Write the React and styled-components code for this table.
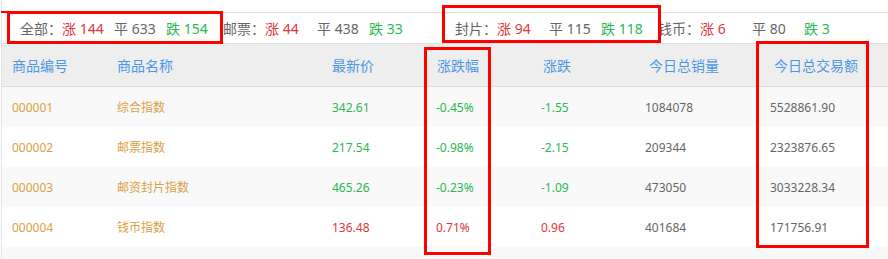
import React from "react";
import styled, {createGlobalStyle} from "styled-components";

const GlobalStyle = createGlobalStyle`
  html, body {
    margin: 0;
    padding: 0;
    overflow: hidden;
    background: #FFFFFF;
  }
  body {
    font-family: "Noto Sans", "Noto Sans CJK SC", sans-serif;
  }
`

const Page = styled.div`
  position: relative;
  margin-left: 1px;
  padding-top: 12px;
  height: 259px;
  box-sizing: border-box;
  border-left: 1px solid #E2E2E2;
`
const StatsBar = styled.div`
  display: flex;
  align-items: center;
  height: 30px;
  padding-left: 18px;

  border-top: 1px solid #DDDDDD;
  border-bottom: 1px solid #DDDDDD;
  font-size: 14px;
  color: #666666;
`
const StatGroup = styled.div`
  display: flex;
  align-items: center;
  flex: 0 0 ${p => p.$width ? p.$width + "px" : "auto"};
`
const StatLabel = styled.span`
  color: #666666;
`
const StatItem = styled.span`
  min-width: 52px;
  white-space: nowrap;
  color: ${p => p.$tone === "up" ? "#E2343C" : p.$tone === "down" ? "#28B950" : "#666666"};
`
const Grid = styled.div`
  display: grid;
  grid-template-columns: 105px 215px 104px 105px 104px 125px 1fr;
  align-items: center;
`
const HeadRow = styled(Grid)`
  height: 42px;
  background-color: #EEEEEE;
  border-bottom: 1px solid #DCDCDC;
`
const HeadCell = styled.div`
  padding-left: ${p => 10 + (p.$shift || 0)}px;
  font-size: 14px;
  color: #4B97E6;
  white-space: nowrap;
`
const Row = styled(Grid)`
  height: 40px;
  background-color: ${p => p.$odd ? "#F9F9F9" : "#FFFFFF"};
`
const Cell = styled.div`
  padding-left: 10px;
  font-size: 12px;
  white-space: nowrap;
  color: ${p => ({
    code: "#DCA046",
    up: "#E2343C",
    down: "#28B950",
  }[p.$tone] || "#666666")};
`
const Filler = styled.div`
  height: 12px;
  background-color: #F9F9F9;
`
const Mark = styled.div`
  position: absolute;
  box-sizing: border-box;
  border: 3px solid #FF0000;
  pointer-events: none;
`
const Tick = styled.div`
  position: absolute;
  left: -1px;
  top: 11px;
  width: 6px;
  height: 2px;
  background-color: #FF0000;
`

const stats = [
    {label: "全部", up: 144, flat: 633, down: 154, width: 203},
    {label: "邮票", up: 44, flat: 438, down: 33, width: 232},
    {label: "封片", up: 94, flat: 115, down: 118, width: 203},
    {label: "钱币", up: 6, flat: 80, down: 3},
]

const heads = [
    {text: "商品编号"},
    {text: "商品名称"},
    {text: "最新价"},
    {text: "涨跌幅", shift: 1},
    {text: "涨跌", shift: 2},
    {text: "今日总销量", shift: 4},
    {text: "今日总交易额", shift: 4},
]

const rows = [
    ["000001", "综合指数", "342.61", "-0.45%", "-1.55", "1084078", "5528861.90"],
    ["000002", "邮票指数", "217.54", "-0.98%", "-2.15", "209344", "2323876.65"],
    ["000003", "邮资封片指数", "465.26", "-0.23%", "-1.09", "473050", "3033228.34"],
    ["000004", "钱币指数", "136.48", "0.71%", "0.96", "401684", "171756.91"],
]

const marks = [
    {left: 5, top: 11, width: 216, height: 33},
    {left: 440, top: 5, width: 219, height: 38},
    {left: 422, top: 47, width: 67, height: 208},
    {left: 754, top: 41, width: 113, height: 207},
]

let App = () => {
    return (
        <>
            <GlobalStyle/>
            <Page>
                <StatsBar>
                    {stats.map(s => (
                        <StatGroup key={s.label} $width={s.width}>
                            <StatLabel>{s.label}：</StatLabel>
                            <StatItem $tone="up">涨 {s.up}</StatItem>
                            <StatItem>平 {s.flat}</StatItem>
                            <StatItem $tone="down">跌 {s.down}</StatItem>
                        </StatGroup>
                    ))}
                </StatsBar>
                <HeadRow>
                    {heads.map(h => <HeadCell key={h.text} $shift={h.shift}>{h.text}</HeadCell>)}
                </HeadRow>
                {rows.map((r, i) => {
                    let tone = r[4].startsWith("-") ? "down" : "up"
                    return (
                        <Row key={r[0]} $odd={i % 2 === 0}>
                            <Cell $tone="code">{r[0]}</Cell>
                            <Cell $tone="code">{r[1]}</Cell>
                            <Cell $tone={tone}>{r[2]}</Cell>
                            <Cell $tone={tone}>{r[3]}</Cell>
                            <Cell $tone={tone}>{r[4]}</Cell>
                            <Cell>{r[5]}</Cell>
                            <Cell>{r[6]}</Cell>
                        </Row>
                    )
                })}
                <Filler/>
                <Tick/>
                {marks.map((m, i) => (
                    <Mark key={i} style={{left: m.left, top: m.top, width: m.width, height: m.height}}/>
                ))}
            </Page>
        </>
    )
}
export default App;
